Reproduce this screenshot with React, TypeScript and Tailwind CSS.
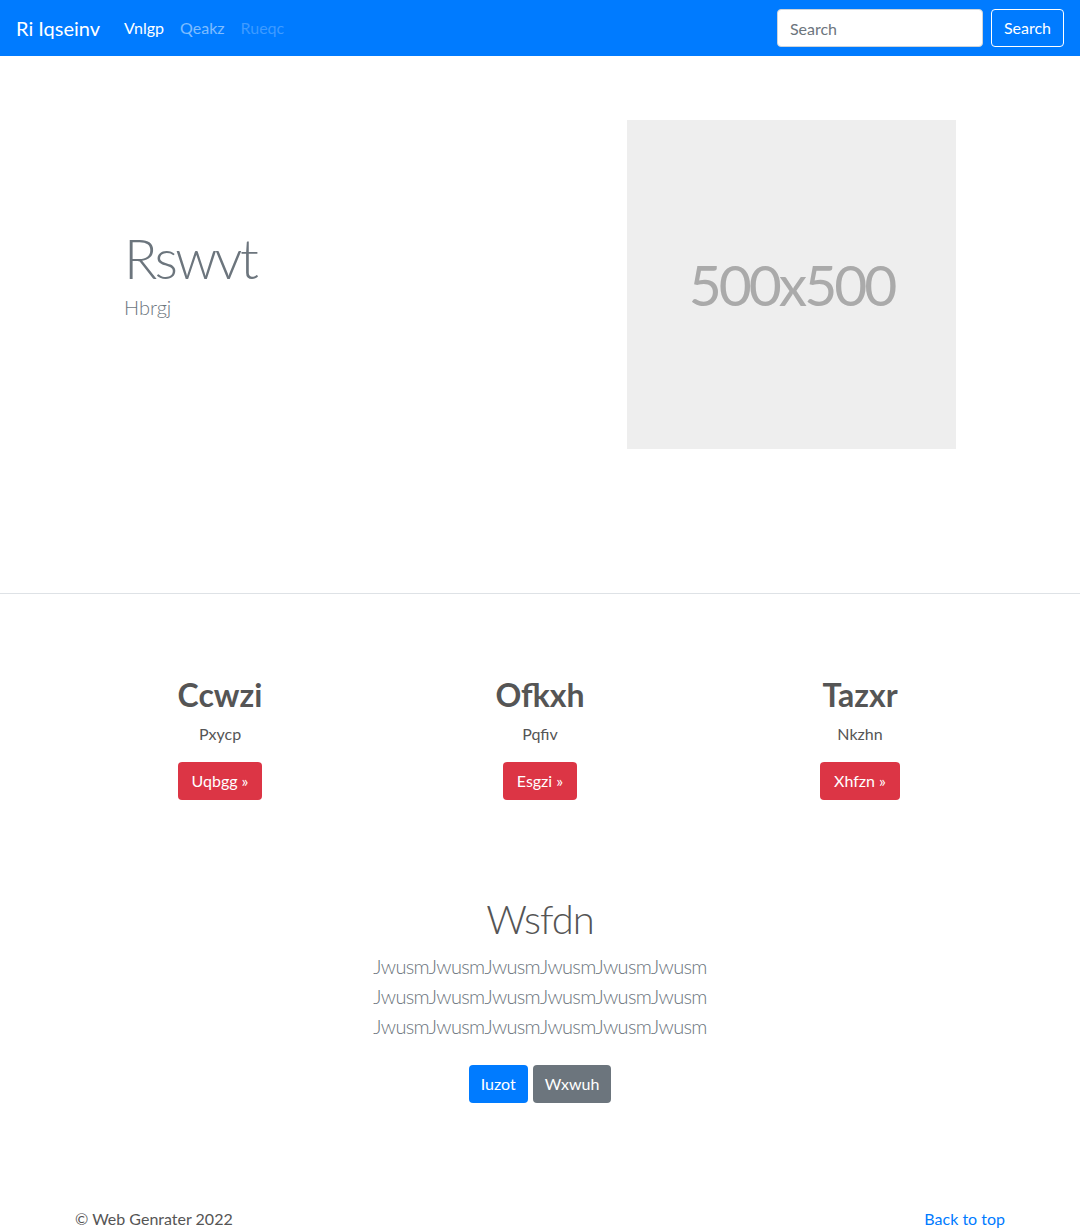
export default function App() {
  const features = [
    { title: "Ccwzi", text: "Pxycp", btn: "Uqbgg" },
    { title: "Ofkxh", text: "Pqfiv", btn: "Esgzi" },
    { title: "Tazxr", text: "Nkzhn", btn: "Xhfzn" },
  ];

  return (
    <div className="min-h-screen bg-white text-[#212529] font-['Lato','Noto_Sans',sans-serif]">
      {/* Navbar */}
      <nav className="h-14 bg-[#007bff] flex items-center px-4">
        <span className="text-xl text-white mr-4">Ri Iqseinv</span>
        <div className="flex items-center text-base">
          <a className="px-2 text-white">Vnlgp</a>
          <a className="px-2 text-white/50">Qeakz</a>
          <a className="px-2 text-white/25">Rueqc</a>
        </div>
        <form className="ml-auto flex items-center gap-2" onSubmit={(e) => e.preventDefault()}>
          <input
            placeholder="Search"
            className="w-[206px] h-[38px] rounded bg-white border border-[#ced4da] px-3 text-base text-[#495057] placeholder:text-[#6c757d] outline-none"
          />
          <button className="h-[38px] px-3 rounded border border-white text-white text-base">Search</button>
        </form>
      </nav>

      {/* Hero */}
      <section className="border-b border-[#dee2e6]">
        <div className="w-[960px] mx-auto px-16 pt-16 pb-[144px] flex items-center">
          <div className="flex-1">
            <h1 className="text-[55px] leading-[1.2] font-light tracking-[-2.5px] text-[#6c757d] mb-[2px]">Rswvt</h1>
            <p className="text-xl font-light text-[#6c757d] mb-6">Hbrgj</p>
          </div>
          <div className="w-[329px] h-[329px] bg-[#eeeeee] flex items-center justify-center">
            <span className="text-[57px] tracking-[-3px] text-[#aaaaaa]">500x500</span>
          </div>
        </div>
      </section>

      {/* Features */}
      <section className="w-[960px] mx-auto pt-[82px] grid grid-cols-3">
        {features.map((f) => (
          <div key={f.title} className="flex flex-col items-center text-center">
            <h2 className="text-[32px] leading-[1.2] font-bold text-[#555555] mb-2">{f.title}</h2>
            <p className="text-base text-[#555555] mb-4">{f.text}</p>
            <button className="h-[38px] px-[14px] rounded bg-[#dc3545] text-white text-base">{f.btn} &raquo;</button>
          </div>
        ))}
      </section>

      {/* Callout */}
      <section className="pt-[95px] flex flex-col items-center text-center">
        <h2 className="text-[40px] leading-[1.2] font-light tracking-[-1px] text-[#555555] mb-2">Wsfdn</h2>
        <p className="text-xl leading-[30px] font-light tracking-[-0.7px] text-[#6c757d] mb-6">
          JwusmJwusmJwusmJwusmJwusmJwusm
          <br />
          JwusmJwusmJwusmJwusmJwusmJwusm
          <br />
          JwusmJwusmJwusmJwusmJwusmJwusm
        </p>
        <div className="flex gap-[5px]">
          <button className="h-[38px] px-3 rounded bg-[#007bff] text-white text-base">Iuzot</button>
          <button className="h-[38px] px-3 rounded bg-[#6c757d] text-white text-base">Wxwuh</button>
        </div>
      </section>

      {/* Footer */}
      <footer className="w-[960px] mx-auto px-[15px] pt-[104px] pb-8 flex justify-between text-base">
        <p className="text-[#555555]">&copy; Web Genrater 2022</p>
        <a className="text-[#007bff]">Back to top</a>
      </footer>
    </div>
  );
}
